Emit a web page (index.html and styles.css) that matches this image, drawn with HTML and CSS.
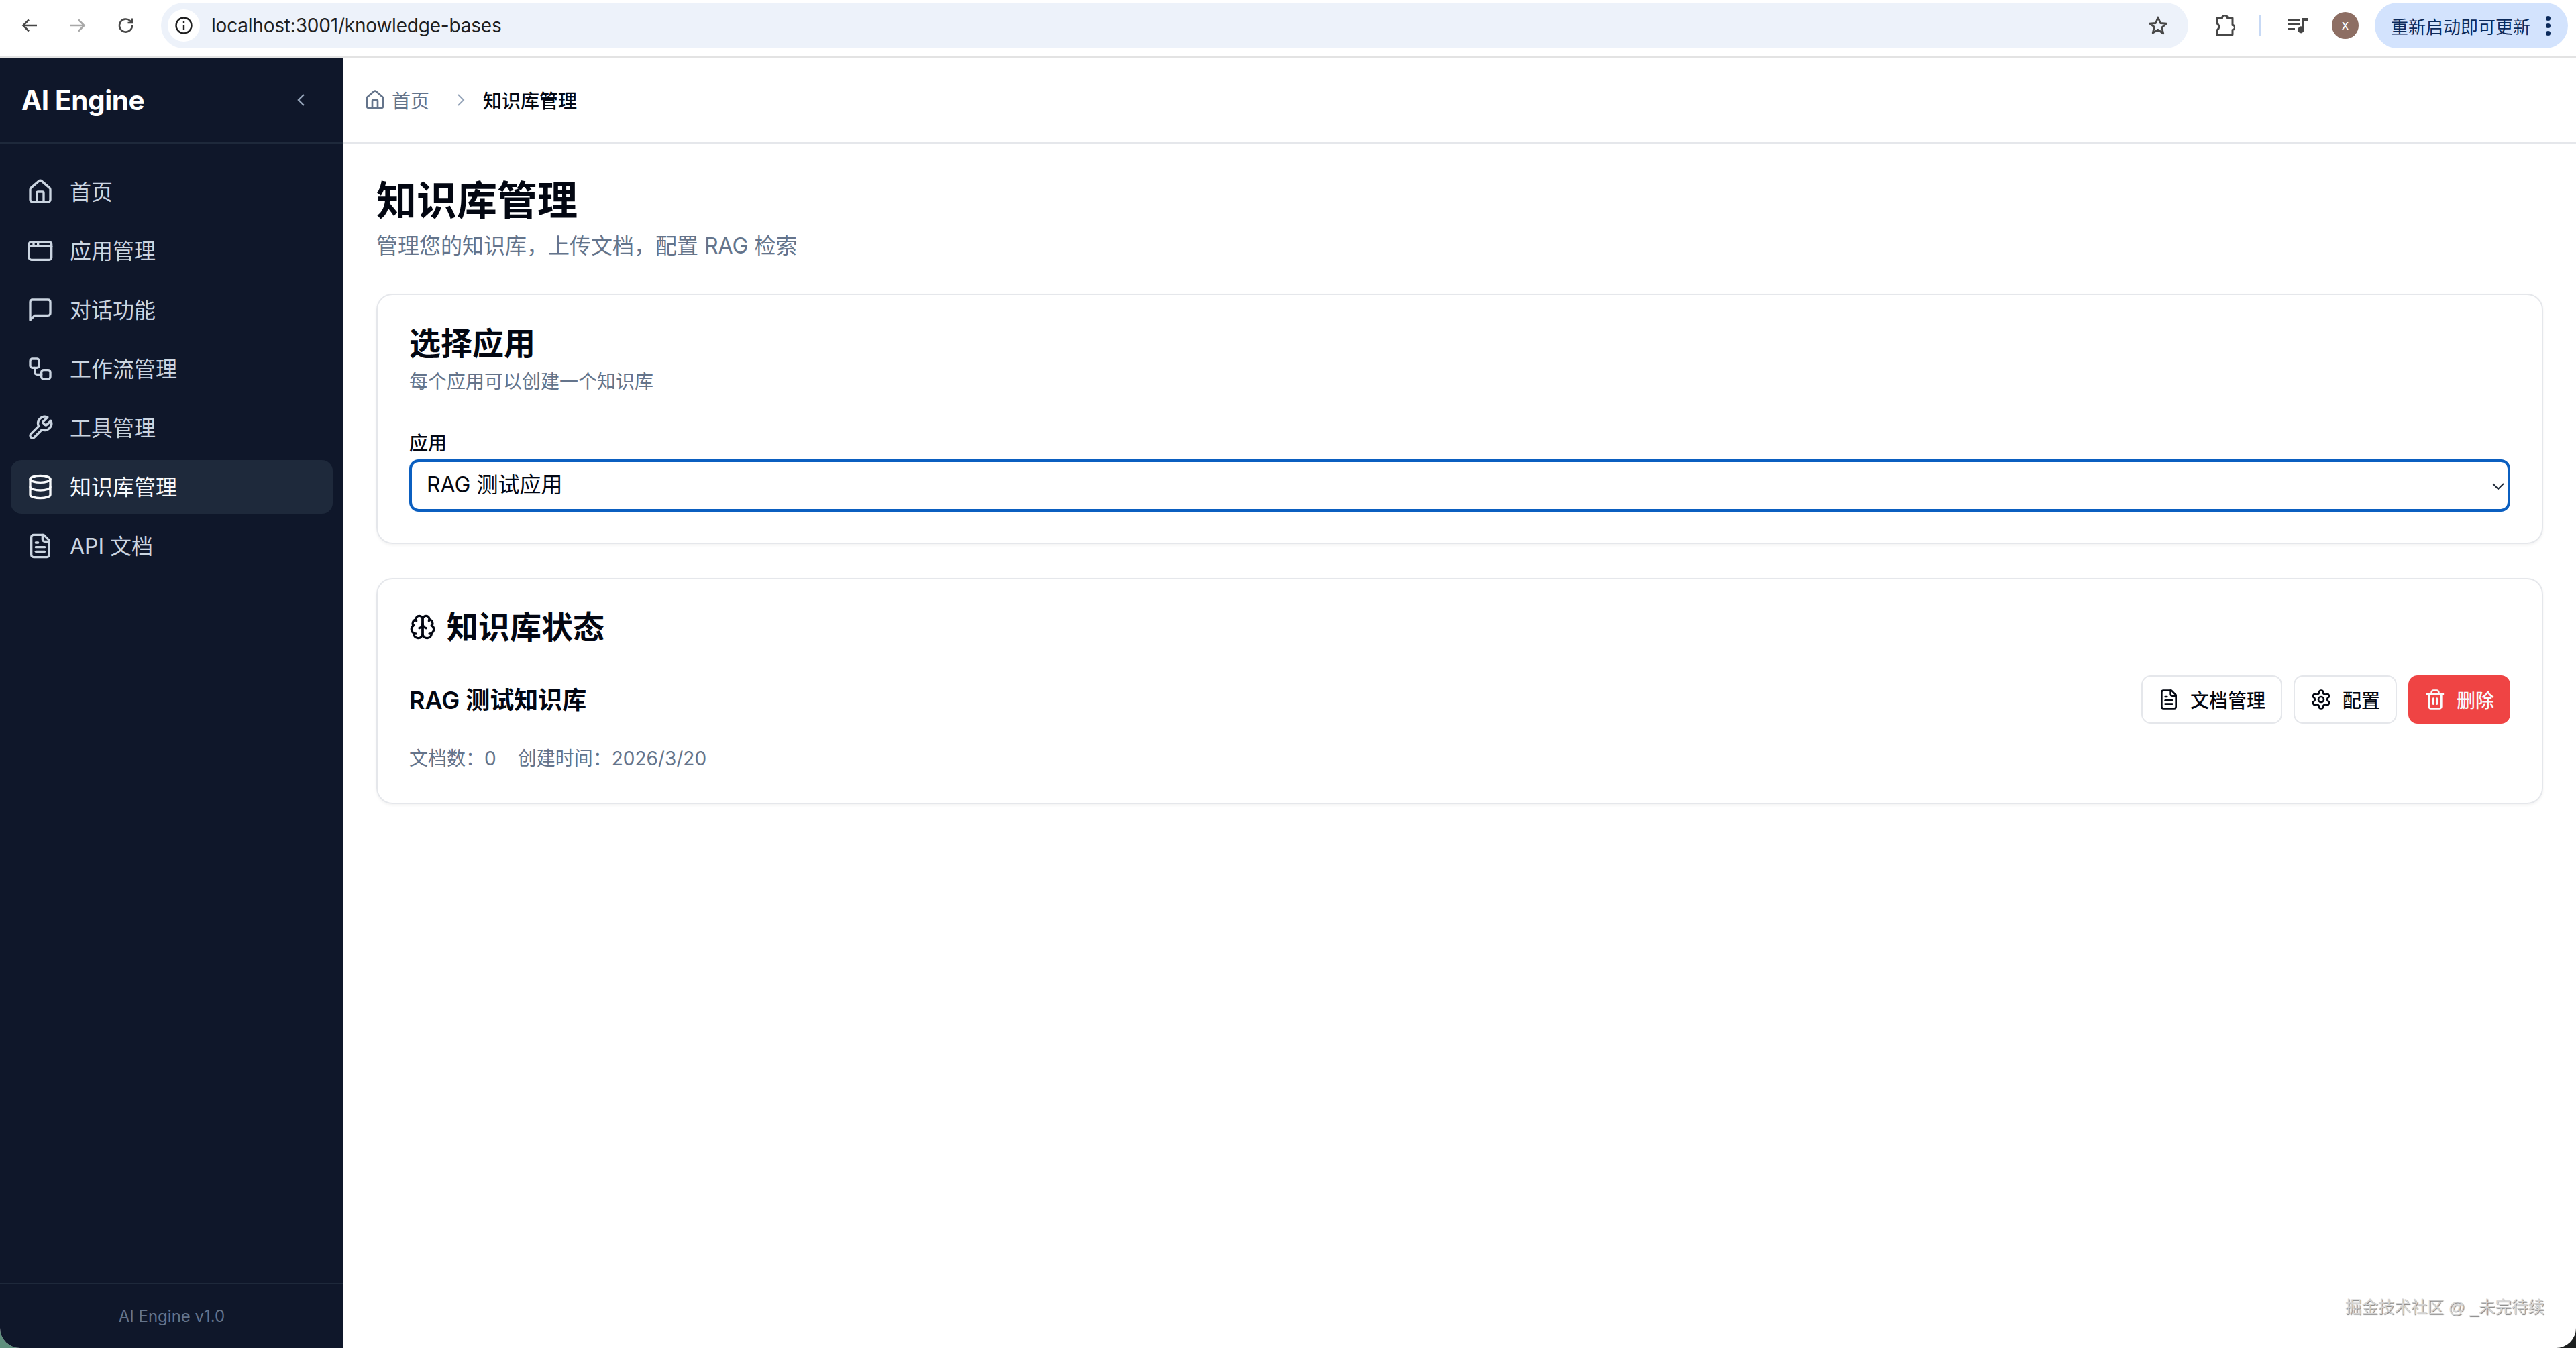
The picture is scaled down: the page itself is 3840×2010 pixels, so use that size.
FILE: index.html
```html
<!DOCTYPE html>
<html lang="zh-CN">
<head>
<meta charset="utf-8">
<title>AI Engine</title>
<link rel="stylesheet" href="styles.css">
</head>
<body>
<svg class="sprite" aria-hidden="true">
  <symbol id="i-house" viewBox="0 0 24 24"><path d="M15 21v-8a1 1 0 0 0-1-1h-4a1 1 0 0 0-1 1v8"/><path d="M3 10a2 2 0 0 1 .709-1.528l7-5.999a2 2 0 0 1 2.582 0l7 5.999A2 2 0 0 1 21 10v9a2 2 0 0 1-2 2H5a2 2 0 0 1-2-2z"/></symbol>
  <symbol id="i-app" viewBox="0 0 24 24"><rect x="2" y="4" width="20" height="16" rx="2"/><path d="M10 4v4"/><path d="M2 8h20"/><path d="M6 4v4"/></symbol>
  <symbol id="i-chat" viewBox="0 0 24 24"><path d="M21 15a2 2 0 0 1-2 2H7l-4 4V5a2 2 0 0 1 2-2h14a2 2 0 0 1 2 2z"/></symbol>
  <symbol id="i-flow" viewBox="0 0 24 24"><rect x="3" y="3" width="8" height="8" rx="2"/><path d="M7 11v4a2 2 0 0 0 2 2h4"/><rect x="13" y="13" width="8" height="8" rx="2"/></symbol>
  <symbol id="i-wrench" viewBox="0 0 24 24"><path d="M14.7 6.3a1 1 0 0 0 0 1.4l1.6 1.6a1 1 0 0 0 1.4 0l3.77-3.77a6 6 0 0 1-7.94 7.94l-6.91 6.91a2.12 2.12 0 0 1-3-3l6.91-6.91a6 6 0 0 1 7.94-7.94l-3.76 3.76z"/></symbol>
  <symbol id="i-db" viewBox="0 0 24 24"><ellipse cx="12" cy="5" rx="9" ry="3"/><path d="M3 5V19A9 3 0 0 0 21 19V5"/><path d="M3 12A9 3 0 0 0 21 12"/></symbol>
  <symbol id="i-file" viewBox="0 0 24 24"><path d="M15 2H6a2 2 0 0 0-2 2v16a2 2 0 0 0 2 2h12a2 2 0 0 0 2-2V7Z"/><path d="M14 2v4a2 2 0 0 0 2 2h4"/><path d="M10 9H8"/><path d="M16 13H8"/><path d="M16 17H8"/></symbol>
  <symbol id="i-brain" viewBox="0 0 24 24"><path d="M12 5a3 3 0 1 0-5.997.125 4 4 0 0 0-2.526 5.77 4 4 0 0 0 .556 6.588A4 4 0 1 0 12 18Z"/><path d="M12 5a3 3 0 1 1 5.997.125 4 4 0 0 1 2.526 5.77 4 4 0 0 1-.556 6.588A4 4 0 1 1 12 18Z"/><path d="M15 13a4.5 4.5 0 0 1-3-4 4.5 4.5 0 0 1-3 4"/><path d="M17.599 6.5a3 3 0 0 0 .399-1.375"/><path d="M6.003 5.125A3 3 0 0 0 6.401 6.5"/><path d="M3.477 10.896a4 4 0 0 1 .585-.396"/><path d="M19.938 10.5a4 4 0 0 1 .585.396"/><path d="M6 18a4 4 0 0 1-1.967-.516"/><path d="M19.967 17.484A4 4 0 0 1 18 18"/></symbol>
  <symbol id="i-gear" viewBox="0 0 24 24"><path d="M12.22 2h-.44a2 2 0 0 0-2 2v.18a2 2 0 0 1-1 1.73l-.43.25a2 2 0 0 1-2 0l-.15-.08a2 2 0 0 0-2.73.73l-.22.38a2 2 0 0 0 .73 2.73l.15.1a2 2 0 0 1 1 1.72v.51a2 2 0 0 1-1 1.74l-.15.09a2 2 0 0 0-.73 2.73l.22.38a2 2 0 0 0 2.73.73l.15-.08a2 2 0 0 1 2 0l.43.25a2 2 0 0 1 1 1.73V20a2 2 0 0 0 2 2h.44a2 2 0 0 0 2-2v-.18a2 2 0 0 1 1-1.73l.43-.25a2 2 0 0 1 2 0l.15.08a2 2 0 0 0 2.73-.73l.22-.39a2 2 0 0 0-.73-2.73l-.15-.08a2 2 0 0 1-1-1.74v-.5a2 2 0 0 1 1-1.74l.15-.09a2 2 0 0 0 .73-2.73l-.22-.38a2 2 0 0 0-2.73-.73l-.15.08a2 2 0 0 1-2 0l-.43-.25a2 2 0 0 1-1-1.73V4a2 2 0 0 0-2-2z"/><circle cx="12" cy="12" r="3"/></symbol>
  <symbol id="i-trash" viewBox="0 0 24 24"><path d="M3 6h18"/><path d="M19 6v14c0 1-1 2-2 2H7c-1 0-2-1-2-2V6"/><path d="M8 6V4c0-1 1-2 2-2h4c1 0 2 1 2 2v2"/><path d="M10 11v6"/><path d="M14 11v6"/></symbol>
</svg>

<div class="window">
  <header class="chrome">
    <div class="chrome-nav">
      <svg class="cicon" viewBox="0 0 28 28"><path d="M25 14H5M13 5.5 4.500 14l8.500 8.500"/></svg>
      <svg class="cicon cicon-off" viewBox="0 0 28 28"><path d="M3 14h20M15 5.500 23.500 14 15 22.500"/></svg>
      <svg class="cicon" viewBox="0 0 28 28"><path d="M23 14a9.500 9.500 0 1 1-2.800-6.700L23 10M23 3.500V10h-6.500"/></svg>
    </div>
    <div class="omnibox">
      <span class="site-chip">
        <svg class="site-icon" viewBox="0 0 26 26"><circle cx="13" cy="13" r="11.500"/><path d="M13 12v7M13 7v2.400"/></svg>
      </span>
      <span class="url">localhost:3001/knowledge-bases</span>
      <svg class="star" viewBox="0 0 30 30"><path d="m15 3 3.500 8.500 9 .7-6.900 5.900 2.200 8.900L15 21.300 7.200 26l2.200-8.900L2.500 12.200l9-.7z"/></svg>
    </div>
    <div class="chrome-tools">
      <svg class="puzzle" viewBox="0 0 30 32"><path d="M3 5h7.500a4 4 0 0 1 8 0H26v10.500a3.500 3.500 0 0 1 0 7V29a1.500 1.500 0 0 1-1.500 1.500h-20A1.500 1.500 0 0 1 3 29v-6a6 6 0 0 0 0-10z"/></svg>
      <span class="tool-sep"></span>
      <svg class="queue" viewBox="0 0 30 24"><path d="M0 2h18v3H0zM0 9h18v3H0zM0 16h11v3H0z"/><path d="M21 1h9v4h-5.500v13.500a4.500 5 0 1 1-3.500-5z"/></svg>
      <span class="avatar">x</span>
      <span class="update-pill">
        <span>重新启动即可更新</span>
        <span class="dots"><i></i><i></i><i></i></span>
      </span>
    </div>
  </header>

  <div class="app">
    <aside class="sidebar">
      <div class="brand">
        <span class="brand-name">AI Engine</span>
        <svg class="brand-toggle" viewBox="0 0 14 20"><path d="M11 2 3 10l8 8"/></svg>
      </div>
      <nav class="nav">
        <a class="nav-item"><svg class="ic ic-nav"><use href="#i-house"/></svg><span class="nav-label">首页</span></a>
        <a class="nav-item"><svg class="ic ic-nav"><use href="#i-app"/></svg><span class="nav-label">应用管理</span></a>
        <a class="nav-item"><svg class="ic ic-nav"><use href="#i-chat"/></svg><span class="nav-label">对话功能</span></a>
        <a class="nav-item"><svg class="ic ic-nav"><use href="#i-flow"/></svg><span class="nav-label">工作流管理</span></a>
        <a class="nav-item"><svg class="ic ic-nav"><use href="#i-wrench"/></svg><span class="nav-label">工具管理</span></a>
        <a class="nav-item is-active"><svg class="ic ic-nav"><use href="#i-db"/></svg><span class="nav-label">知识库管理</span></a>
        <a class="nav-item"><svg class="ic ic-nav"><use href="#i-file"/></svg><span class="nav-label">API 文档</span></a>
      </nav>
      <div class="side-foot">AI Engine v1.0</div>
    </aside>

    <div class="content">
      <div class="crumbs">
        <svg class="ic ic-crumb"><use href="#i-house"/></svg>
        <span class="crumb-home">首页</span>
        <svg class="crumb-sep" viewBox="0 0 14 20"><path d="M3 2l8 8-8 8"/></svg>
        <span class="crumb-now">知识库管理</span>
      </div>
      <main class="page">
        <h1 class="page-title">知识库管理</h1>
        <p class="page-sub">管理您的知识库，上传文档，配置 RAG 检索</p>

        <section class="card">
          <h2 class="card-title">选择应用</h2>
          <p class="card-sub">每个应用可以创建一个知识库</p>
          <label class="field-label" for="app-select">应用</label>
          <div class="select-wrap">
            <select class="select" id="app-select"><option>RAG 测试应用</option></select>
            <svg class="select-arrow" viewBox="0 0 18 10"><path d="M1 1l8 8 8-8"/></svg>
          </div>
        </section>

        <section class="card">
          <h2 class="card-title card-title-icon"><svg class="ic ic-brain"><use href="#i-brain"/></svg>知识库状态</h2>
          <div class="kb-row">
            <h3 class="kb-name">RAG 测试知识库</h3>
            <div class="kb-actions">
              <button class="btn"><svg class="ic ic-btn"><use href="#i-file"/></svg>文档管理</button>
              <button class="btn"><svg class="ic ic-btn"><use href="#i-gear"/></svg>配置</button>
              <button class="btn btn-danger"><svg class="ic ic-btn"><use href="#i-trash"/></svg>删除</button>
            </div>
          </div>
          <p class="kb-meta"><span>文档数：0</span><span>创建时间：2026/3/20</span></p>
        </section>
      </main>
    </div>
  </div>
  <div class="watermark">掘金技术社区 @ _未完待续</div>
</div>
</body>
</html>
```

FILE: styles.css
```css
* { box-sizing: border-box; }
html, body { margin: 0; height: 100%; }
body {
  background: linear-gradient(90deg, #5f8f7d 0 50%, #1c1f1f 50% 100%);
  font-family: Inter, "Noto Sans CJK SC", sans-serif;
  color: #030712;
  overflow: hidden;
}
.sprite { display: none; }
.window {
  position: relative;
  height: 2010px;
  display: flex;
  flex-direction: column;
  background: #fff;
  border-radius: 0 0 30px 30px;
  overflow: hidden;
}

/* browser bar */
.chrome {
  height: 86px;
  flex: none;
  display: flex;
  align-items: flex-start;
  padding: 4px 12px 0 30px;
  background: #fff;
  border-bottom: 2px solid #e3e3e3;
}
.chrome-nav { display: flex; gap: 44px; height: 68px; align-items: center; margin-right: 38px; }
.cicon { width: 28px; height: 28px; fill: none; stroke: #474747; stroke-width: 2.600; }
.cicon-off { stroke: #a8a8a8; }
.omnibox {
  flex: 1;
  height: 68px;
  display: flex;
  align-items: center;
  padding: 0 30px 0 10px;
  background: #edf2fa;
  border-radius: 34px;
}
.site-chip {
  width: 48px;
  height: 48px;
  border-radius: 50%;
  background: #fff;
  display: flex;
  align-items: center;
  justify-content: center;
}
.site-icon { width: 26px; height: 26px; fill: none; stroke: #1f1f1f; stroke-width: 2.400; }
.url { flex: 1; margin-left: 17px; font-size: 28px; letter-spacing: -0.2px; color: #1f1f1f; }
.star { width: 30px; height: 30px; fill: none; stroke: #474747; stroke-width: 2.800; stroke-linejoin: round; }
.chrome-tools { display: flex; align-items: center; height: 68px; margin-left: 40px; }
.puzzle { width: 30px; height: 32px; fill: none; stroke: #474747; stroke-width: 3; stroke-linejoin: round; }
.tool-sep { width: 3px; height: 31px; margin: 0 39px 0 36px; background: #c7d9f5; }
.queue { width: 30px; height: 24px; fill: #474747; }
.avatar {
  width: 40px;
  height: 40px;
  margin-left: 36px;
  border-radius: 50%;
  background: #8d6e63;
  color: #fff;
  font-size: 20px;
  line-height: 38px;
  text-align: center;
}
.update-pill {
  width: 288px;
  height: 68px;
  margin-left: 24px;
  padding: 0 26px 0 24px;
  display: flex;
  align-items: center;
  justify-content: space-between;
  background: #d3e3fd;
  border-radius: 34px;
  font-size: 26px;
  color: #0b2a5b;
}
.dots { display: flex; flex-direction: column; gap: 4px; }
.dots i { width: 7px; height: 7px; border-radius: 50%; background: #0b2a5b; }

/* app shell */
.app { flex: 1; min-height: 0; display: flex; }
.ic { fill: none; stroke: currentColor; stroke-linecap: round; stroke-linejoin: round; stroke-width: 2; flex: none; }

.sidebar {
  width: 512px;
  flex: none;
  display: flex;
  flex-direction: column;
  background: #0f172a;
  color: #cbd5e1;
}
.brand {
  height: 128px;
  flex: none;
  display: flex;
  align-items: center;
  justify-content: space-between;
  padding: 0 56px 0 32px;
  border-bottom: 2px solid #1e293b;
}
.brand-name { font-size: 40.500px; font-weight: 700; color: #fff; letter-spacing: -0.4px; }
.brand-toggle { width: 14px; height: 20px; fill: none; stroke: #94a3b8; stroke-width: 2.400; }
.nav { flex: 1; display: flex; flex-direction: column; gap: 8px; padding: 32px 16px 0; }
.nav-item {
  height: 80px;
  display: flex;
  align-items: center;
  gap: 24px;
  padding: 0 24px;
  border-radius: 16px;
  font-size: 32px;
}
.nav-label { margin-top: -4px; }
.nav-item.is-active { background: #1e293b; color: #f8fafc; }
.ic-nav { width: 40px; height: 40px; }
.side-foot {
  height: 97px;
  flex: none;
  display: flex;
  align-items: center;
  justify-content: center;
  border-top: 2px solid #1e293b;
  font-size: 24px;
  color: #64748b;
}

/* main */
.content { flex: 1; min-width: 0; display: flex; flex-direction: column; }
.crumbs {
  height: 128px;
  flex: none;
  display: flex;
  align-items: center;
  padding-left: 31px;
  border-bottom: 2px solid #e5e7eb;
  font-size: 28px;
  color: #64748b;
}
.ic-crumb { width: 32px; height: 32px; margin-right: 9px; }
.crumb-sep { width: 14px; height: 20px; margin: 0 26px 0 40px; fill: none; stroke: #94a3b8; stroke-width: 2; }
.crumb-now { color: #030712; font-weight: 500; }
.page { flex: 1; padding: 49px 49px 0; }
.page-title { margin: 0; font-size: 60px; line-height: 72px; font-weight: 700; }
.page-sub { margin: 8px 0 47px; font-size: 32px; line-height: 48px; color: #64748b; }

.card {
  padding: 44px 47px 46px;
  margin-bottom: 51px;
  border: 2px solid #e5e7eb;
  border-radius: 24px;
  box-shadow: 0 2px 4px rgba(0, 0, 0, .05);
}
.card-title { margin: 0; font-size: 47px; line-height: 56px; font-weight: 700; }
.card-title-icon { display: flex; align-items: center; gap: 16px; line-height: 54px; padding-bottom: 2px; }
.ic-brain { width: 40px; height: 40px; }
.card-sub { margin: 9px 0 52px; font-size: 28px; line-height: 40px; color: #64748b; }
.field-label { display: block; margin-bottom: 4px; font-size: 28px; line-height: 40px; font-weight: 500; }
.select-wrap { position: relative; }
.select {
  display: block;
  width: 100%;
  height: 78px;
  padding: 0 22px 4px;
  appearance: none;
  background: #fff;
  border: 4px solid #0b5fc0;
  border-radius: 14px;
  outline: none;
  font: 400 32px Inter, "Noto Sans CJK SC", sans-serif;
  color: #030712;
}
.select-arrow {
  position: absolute;
  top: 35px;
  right: 9px;
  width: 18px;
  height: 10px;
  fill: none;
  stroke: #1f2937;
  stroke-width: 2;
}
.kb-row { display: flex; align-items: center; justify-content: space-between; margin-top: 43px; }
.kb-name { margin: 0 0 4px; font-size: 36px; font-weight: 600; }
.kb-actions { display: flex; gap: 17px; }
.btn {
  height: 72px;
  display: flex;
  align-items: center;
  gap: 16px;
  padding: 0 23px;
  background: #fff;
  border: 2px solid #e5e7eb;
  border-radius: 14px;
  font: 500 28px Inter, "Noto Sans CJK SC", sans-serif;
  color: #030712;
}
.btn-danger { padding: 0 22px; background: #ef4444; border-color: #ef4444; color: #f8fafc; }
.ic-btn { width: 32px; height: 32px; }
.kb-meta { display: flex; gap: 32px; margin: 32px 0 0; font-size: 28px; line-height: 40px; color: #64748b; }

.watermark {
  position: absolute;
  right: 47px;
  bottom: 45px;
  font: 24.500px "Liberation Sans", "Noto Sans CJK SC", sans-serif;
  color: #d4d4d4;
  text-shadow: 1px 1px 1px #808080;
}
```
